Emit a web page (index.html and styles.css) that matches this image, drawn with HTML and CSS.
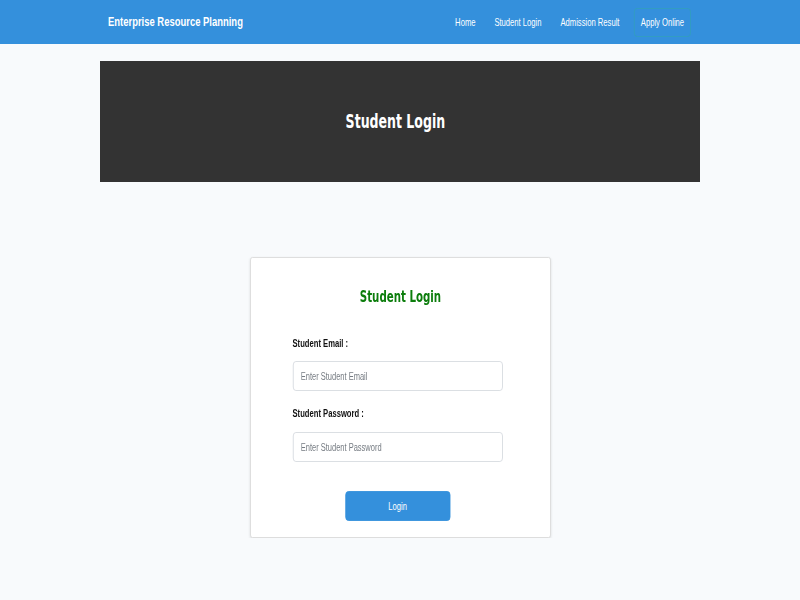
FILE: index.html
```html
<!DOCTYPE html>
<html>
<head>
<meta charset="utf-8">
<link rel="stylesheet" href="styles.css">
</head>
<body>
<nav class="navbar">
  <div class="nav-inner">
    <a class="brand" href="#">Enterprise Resource Planning</a>
    <ul class="nav-links">
      <li><a href="#">Home</a></li>
      <li><a href="#">Student Login</a></li>
      <li><a href="#">Admission Result</a></li>
      <li><a class="apply" href="#">Apply Online</a></li>
    </ul>
  </div>
</nav>
<header class="banner">
  <h1>Student Login</h1>
</header>
<main class="main">
  <form class="card">
    <h2>Student Login</h2>
    <div class="fields">
      <label class="label">Student Email :</label>
      <input class="input" type="text" placeholder="Enter Student Email">
      <label class="label label-2">Student Password :</label>
      <input class="input" type="password" placeholder="Enter Student Password">
      <div class="actions"><button class="btn" type="button">Login</button></div>
    </div>
  </form>
</main>
</body>
</html>
```
FILE: styles.css
```css
* { box-sizing: border-box; }
html, body { margin: 0; padding: 0; }
body {
  background: #f8fafc;
  font-family: "Liberation Sans", Arial, sans-serif;
  color: #212529;
}
.brand,
.nav-links,
.banner h1,
.card {
  transform: scaleX(0.75);
}
.navbar {
  background: #3490dc;
  height: 44px;
}
.nav-inner {
  width: 600px;
  height: 44px;
  margin: 0 auto;
  padding: 0 9px 0 8px;
  display: flex;
  align-items: center;
  justify-content: space-between;
}
.brand {
  display: inline-block;
  transform-origin: left center;
  color: #fff;
  text-decoration: none;
  font-weight: bold;
  font-size: 12.6px;
  line-height: 16px;
}
.nav-links {
  transform-origin: right center;
  list-style: none;
  display: flex;
  align-items: center;
  margin: 0;
  padding: 0;
}
.nav-links a {
  display: flex;
  align-items: center;
  height: 29px;
  color: #fff;
  text-decoration: none;
  font-size: 10.2px;
  padding: 0 12.6px;
}
.nav-links a.apply {
  border: 1px solid rgba(48, 170, 165, 0.55);
  border-radius: 4px;
  padding: 0 7.8px;
  margin-left: 7px;
}
.banner {
  width: 600px;
  height: 121px;
  margin: 17px auto 0;
  padding-right: 10px;
  background: #333333;
  display: flex;
  align-items: center;
  justify-content: center;
}
.banner h1 {
  margin: 0;
  color: #fff;
  font-family: "DejaVu Sans Condensed", "DejaVu Sans", sans-serif;
  font-stretch: condensed;
  font-size: 18.6px;
  font-weight: bold;
  line-height: 24px;
}
.main {
  display: flex;
  justify-content: center;
  padding-top: 75px;
}
.card {
  transform-origin: top center;
  flex: none;
  width: 401px;
  height: 281px;
  background: #fff;
  border: 1px solid #dadada;
  border-radius: 3px;
  box-shadow: 0 1px 3px rgba(0, 0, 0, 0.12);
  padding: 28.5px 0 0;
  display: flex;
  flex-direction: column;
}
.card h2 {
  margin: 0 0 30px;
  text-align: center;
  color: #0c7d0c;
  font-family: "DejaVu Sans Condensed", "DejaVu Sans", sans-serif;
  font-stretch: condensed;
  font-size: 15.2px;
  font-weight: bold;
  line-height: 20px;
}
.fields {
  display: flex;
  flex-direction: column;
  padding: 0 63px 0 55.5px;
}
.label {
  font-size: 10.2px;
  font-weight: bold;
  line-height: 14px;
  color: #111;
  margin-bottom: 10.5px;
}
.label-2 { margin-bottom: 11.5px; }
.input {
  width: 100%;
  height: 30px;
  border: 1px solid #d6dadf;
  border-radius: 4px;
  padding: 0 10px;
  font-family: inherit;
  font-size: 10px;
  color: #333;
  margin-bottom: 15.5px;
  outline: none;
  background: #fff;
}
.input::placeholder { color: #757b82; }
.actions {
  display: flex;
  justify-content: center;
  margin-top: 13.5px;
}
.btn {
  width: 140px;
  height: 30px;
  background: #3490dc;
  border: 1px solid #3490dc;
  border-radius: 4px;
  color: #fff;
  font-family: inherit;
  font-size: 10.2px;
}
```
